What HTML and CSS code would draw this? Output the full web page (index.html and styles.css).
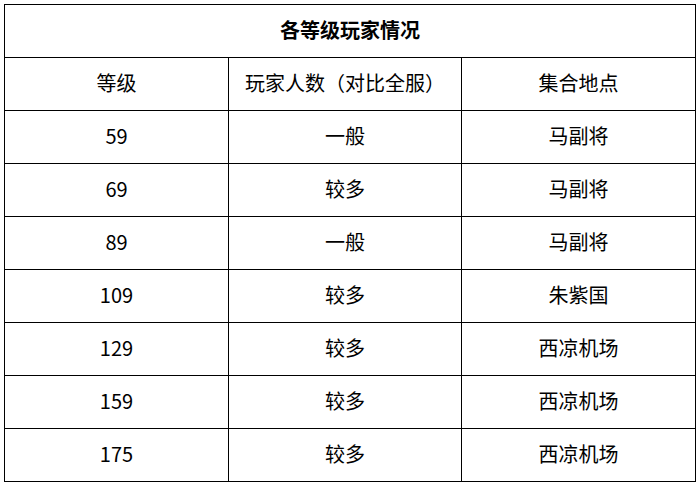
FILE: index.html
```html
<!DOCTYPE html>
<html lang="zh">
<head>
<meta charset="utf-8">
<link rel="stylesheet" href="styles.css">
</head>
<body>
<table class="grid">
  <colgroup>
    <col class="c1">
    <col class="c2">
    <col class="c3">
  </colgroup>
  <tr><th colspan="3" class="title">各等级玩家情况</th></tr>
  <tr><td>等级</td><td>玩家人数（对比全服）</td><td>集合地点</td></tr>
  <tr><td>59</td><td>一般</td><td>马副将</td></tr>
  <tr><td>69</td><td>较多</td><td>马副将</td></tr>
  <tr><td>89</td><td>一般</td><td>马副将</td></tr>
  <tr><td>109</td><td>较多</td><td>朱紫国</td></tr>
  <tr><td>129</td><td>较多</td><td>西凉机场</td></tr>
  <tr><td>159</td><td>较多</td><td>西凉机场</td></tr>
  <tr><td>175</td><td>较多</td><td>西凉机场</td></tr>
</table>
</body>
</html>
```
FILE: styles.css
```css
html, body {
  margin: 0;
  padding: 0;
  background: #ffffff;
}
body {
  padding: 4px;
  font-family: "Noto Sans CJK SC", "Noto Sans", sans-serif;
  color: #000000;
}
.grid {
  border-collapse: collapse;
  table-layout: fixed;
  width: 691px;
}
.c1 { width: 224px; }
.c2 { width: 233px; }
.c3 { width: 234px; }
.grid tr {
  height: 53px;
}
.grid th,
.grid td {
  border: 1px solid #000000;
  padding: 0 0 3px 0;
  text-align: center;
  vertical-align: middle;
  font-size: 20px;
  font-weight: 400;
  line-height: 20px;
}
.grid .title {
  font-weight: 700;
}
```
